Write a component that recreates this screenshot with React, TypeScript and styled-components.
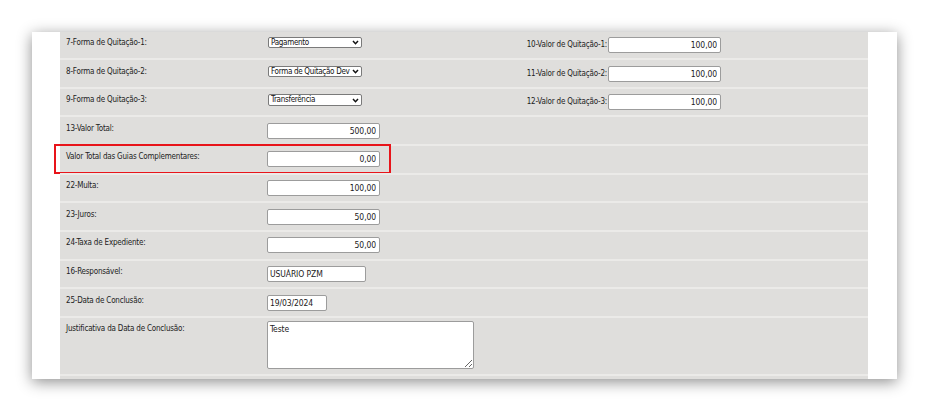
import styled, { createGlobalStyle } from 'styled-components';

const FONT = `"DejaVu Sans Condensed", "Liberation Sans", Arial, sans-serif`;

const GlobalStyle = createGlobalStyle`
  html, body {
    margin: 0;
    padding: 0;
    background: #ffffff;
  }
  body {
    font-family: ${FONT};
  }
`;

type FieldRow = {
  label: string;
  kind: 'select' | 'input' | 'text' | 'area';
  value: string;
  width?: number;
  right?: { label: string; value: string };
  highlight?: boolean;
  tall?: boolean;
};

const rows: FieldRow[] = [
  { label: '7-Forma de Quitação-1:', kind: 'select', value: 'Pagamento', right: { label: '10-Valor de Quitação-1:', value: '100,00' } },
  { label: '8-Forma de Quitação-2:', kind: 'select', value: 'Forma de Quitação Dev', right: { label: '11-Valor de Quitação-2:', value: '100,00' } },
  { label: '9-Forma de Quitação-3:', kind: 'select', value: 'Transferência', right: { label: '12-Valor de Quitação-3:', value: '100,00' } },
  { label: '13-Valor Total:', kind: 'input', value: '500,00' },
  { label: 'Valor Total das Guias Complementares:', kind: 'input', value: '0,00', highlight: true },
  { label: '22-Multa:', kind: 'input', value: '100,00' },
  { label: '23-Juros:', kind: 'input', value: '50,00' },
  { label: '24-Taxa de Expediente:', kind: 'input', value: '50,00' },
  { label: '16-Responsável:', kind: 'text', value: 'USUÁRIO PZM', width: 99 },
  { label: '25-Data de Conclusão:', kind: 'text', value: '19/03/2024', width: 60 },
  { label: 'Justificativa da Data de Conclusão:', kind: 'area', value: 'Teste', tall: true },
];

export default function App() {
  return (
    <>
      <GlobalStyle />
      <Page>
        <Shot>
          <Table>
            {rows.map((r) => (
              <Row key={r.label} $tall={r.tall}>
                <Label>{r.label}</Label>
                <Cell>
                  {r.kind === 'select' && (
                    <SelectBox>
                      <SelectText>{r.value}</SelectText>
                      <Chevron viewBox="0 0 8 6" aria-hidden>
                        <path d="M1 1.3 L4 4.5 L7 1.3" fill="none" stroke="#111" strokeWidth="1.8" />
                      </Chevron>
                    </SelectBox>
                  )}
                  {r.kind === 'input' && <NumInput readOnly value={r.value} />}
                  {r.kind === 'text' && <TextInput readOnly value={r.value} $w={r.width ?? 100} />}
                  {r.kind === 'area' && <Area readOnly value={r.value} />}
                </Cell>
                {r.right ? (
                  <>
                    <RightLabel>{r.right.label}</RightLabel>
                    <Cell>
                      <NumInput readOnly value={r.right.value} />
                    </Cell>
                  </>
                ) : null}
                {r.highlight && <Highlight />}
              </Row>
            ))}
            <Row />
          </Table>
        </Shot>
      </Page>
    </>
  );
}

const Page = styled.div`
  padding: 32px 0 0 32px;
  height: 411px;
  box-sizing: border-box;
`;

const Shot = styled.div`
  width: 865px;
  height: 347px;
  background: #ffffff;
  box-shadow: 0 3px 14px rgba(0, 0, 0, 0.45);
  padding: 0 29px 0 28px;
  box-sizing: border-box;
  overflow: hidden;
`;

const Table = styled.div`
  margin-top: -2.67px;
  background: #dfdedc;
  display: flex;
  flex-direction: column;
`;

const Row = styled.div<{ $tall?: boolean }>`
  position: relative;
  display: grid;
  grid-template-columns: 207px 241px 100px 1fr;
  align-items: start;
  height: ${(p) => (p.$tall ? '58px' : '28.67px')};
  box-sizing: border-box;
  border-top: 2px solid #ebeae8;
  padding-top: 5.5px;
  font-size: 8px;
  letter-spacing: -0.2px;
  color: #222;
`;

const Label = styled.div`
  padding-left: 6px;
  line-height: 12px;
  white-space: nowrap;
`;

const RightLabel = styled.div`
  text-align: right;
  padding-right: 1px;
  line-height: 12px;
  padding-top: 2px;
  white-space: nowrap;
`;

const Cell = styled.div`
  display: flex;
  align-items: flex-start;
`;

const SelectBox = styled.div`
  position: relative;
  margin: 0 0 0 1px;
  width: 94px;
  height: 11.5px;
  box-sizing: border-box;
  border: 1px solid #7a7a7a;
  border-radius: 2px;
  background: #fff;
  display: flex;
  align-items: center;
  overflow: hidden;
`;

const SelectText = styled.span`
  padding-left: 2px;
  padding-right: 10px;
  font-size: 8px;
  letter-spacing: -0.3px;
  line-height: 9px;
  color: #111;
  white-space: nowrap;
`;

const Chevron = styled.svg`
  position: absolute;
  right: 2px;
  top: 2.5px;
  width: 7px;
  height: 5px;
  background: #fff;
`;

const baseField = `
  box-sizing: border-box;
  height: 16px;
  border: 1px solid #9c9c9c;
  border-radius: 2px;
  background: #fff;
  font-family: ${FONT};
  font-size: 8.5px;
  letter-spacing: -0.1px;
  color: #1a1a1a;
  outline: none;
  margin: 0;
`;

const NumInput = styled.input`
  ${baseField}
  width: 113px;
  text-align: right;
  padding: 0 3px 0 2px;
`;

const TextInput = styled.input<{ $w: number }>`
  ${baseField}
  width: ${(p) => p.$w}px;
  text-align: left;
  padding: 0 2px;
`;

const Area = styled.textarea`
  ${baseField}
  width: 207px;
  height: 48px;
  margin-top: -2.5px;
  padding: 2px 2px;
  resize: both;
  line-height: 11px;
`;

const Highlight = styled.div`
  position: absolute;
  left: -6px;
  top: -2px;
  width: 337px;
  height: 30px;
  box-sizing: border-box;
  border: 2px solid #e8141a;
  pointer-events: none;
`;
